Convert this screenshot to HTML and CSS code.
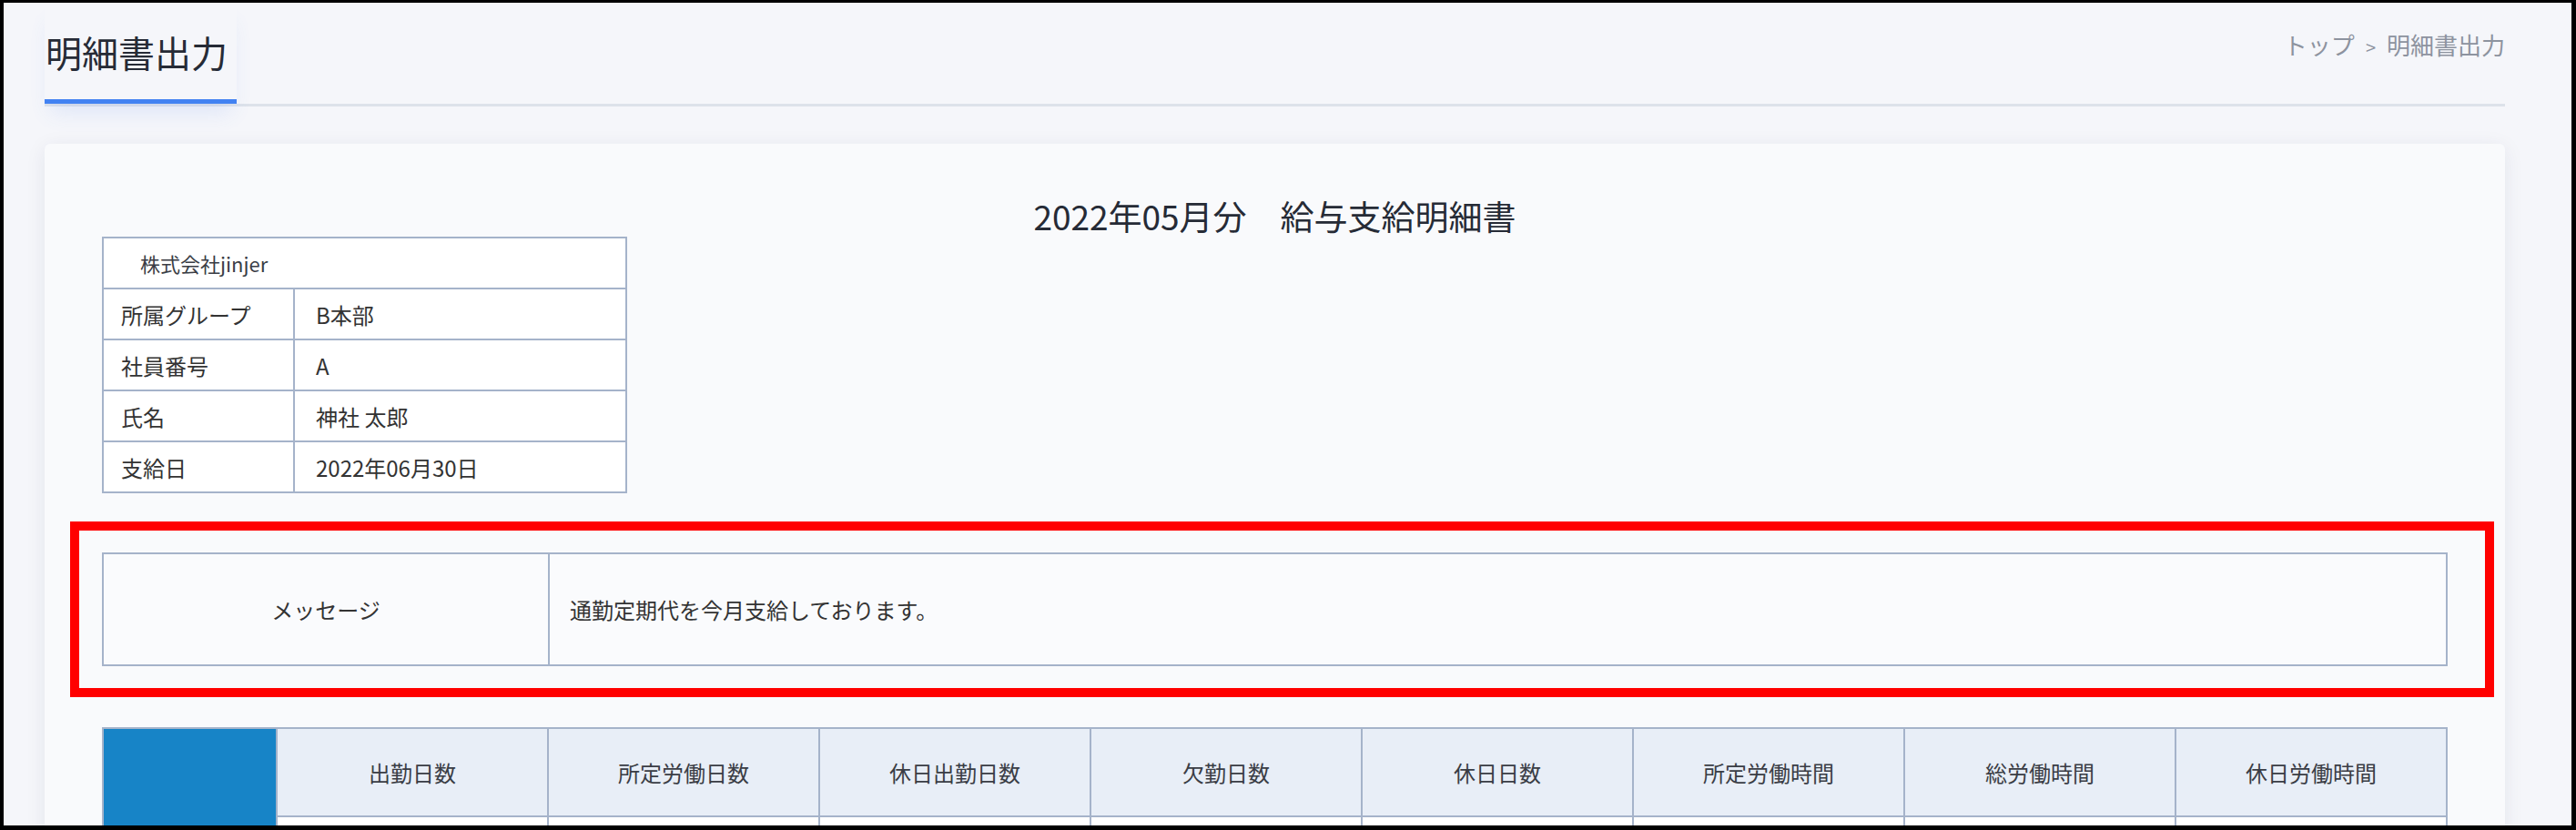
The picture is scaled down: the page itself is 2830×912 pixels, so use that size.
FILE: index.html
```html
<!DOCTYPE html>
<html lang="ja">
<head>
    <meta charset="UTF-8">
    <meta name="viewport" content="width=device-width, initial-scale=1.0">
    <title>明細書出力</title>
    <link rel="stylesheet" href="styles.css">
</head>
<body>
    <div class="frame">
        <div class="page">
            <div class="page-head">
                <h1 class="page-title">明細書出力</h1>
                <div class="breadcrumb">トップ<span class="sep">&gt;</span>明細書出力</div>
            </div>

            <div class="card">
                <h2 class="slip-title">2022年05月分　給与支給明細書</h2>

                <table class="info">
                    <tr>
                        <td class="company" colspan="2">株式会社jinjer</td>
                    </tr>
                    <tr>
                        <td class="label">所属グループ</td>
                        <td class="value">B本部</td>
                    </tr>
                    <tr>
                        <td class="label">社員番号</td>
                        <td class="value">A</td>
                    </tr>
                    <tr>
                        <td class="label">氏名</td>
                        <td class="value">神社 太郎</td>
                    </tr>
                    <tr>
                        <td class="label">支給日</td>
                        <td class="value">2022年06月30日</td>
                    </tr>
                </table>

                <div class="mark">
                    <table class="message">
                        <tr>
                            <td class="msg-label">メッセージ</td>
                            <td class="msg-text">通勤定期代を今月支給しております。</td>
                        </tr>
                    </table>
                </div>

                <table class="attend">
                    <tr class="attend-head">
                        <td class="side" rowspan="2"></td>
                        <td>出勤日数</td>
                        <td>所定労働日数</td>
                        <td>休日出勤日数</td>
                        <td>欠勤日数</td>
                        <td>休日日数</td>
                        <td>所定労働時間</td>
                        <td>総労働時間</td>
                        <td>休日労働時間</td>
                    </tr>
                    <tr class="attend-body">
                        <td></td>
                        <td></td>
                        <td></td>
                        <td></td>
                        <td></td>
                        <td></td>
                        <td></td>
                        <td></td>
                    </tr>
                </table>
            </div>
        </div>
    </div>
</body>
</html>
```

FILE: styles.css
```css
body {
    margin: 0;
    font-family: "Noto Sans CJK JP", "Noto Sans", sans-serif;
    color: #333;
}

.frame {
    height: 912px;
    box-sizing: border-box;
    border-style: solid;
    border-color: #000;
    border-width: 3px 5px 5px 4px;
    background-color: #f5f6fa;
    overflow: hidden;
}

.page {
    padding: 0 73px 0 45px;
}

/* header */
.page-head {
    display: flex;
    justify-content: space-between;
    align-items: flex-start;
    border-bottom: 3px solid #dde2ea;
}

.page-title {
    margin: 0;
    padding: 26px 10px 24px 1px;
    font-size: 40px;
    line-height: 56px;
    font-weight: 400;
    color: #262b36;
    border-bottom: 5px solid #4282f2;
    box-shadow: 0 16px 22px -6px rgba(70, 120, 240, 0.12);
}

.breadcrumb {
    padding-top: 27px;
    font-size: 26px;
    line-height: 38px;
    color: #8d939f;
}

.sep {
    margin: 0 12px;
    font-size: 20px;
}

/* card */
.card {
    margin-top: 41px;
    padding: 57px 63px 40px 63px;
    background-color: #f9fafc;
    border-radius: 6px;
    box-shadow: 0 4px 22px rgba(30, 40, 80, 0.08);
}

.slip-title {
    margin: 0 0 1px;
    text-align: center;
    font-size: 37px;
    line-height: 44px;
    font-weight: 400;
    color: #262b36;
}

table {
    border-collapse: collapse;
}

td {
    border: 2px solid #a5b3ca;
    padding: 0;
    font-size: 24px;
}

/* info table */
.info {
    width: 577px;
    background-color: #fff;
}

.info td {
    height: 54px;
}

.info .company {
    padding-left: 40px;
    font-size: 22px;
    color: #3a3d45;
}

.info .label {
    width: 189px;
    padding-left: 19px;
}

.info .value {
    padding-left: 23px;
}

/* message */
.mark {
    margin: 31px -51px 0 -35px;
    padding: 24px 41px 24px 25px;
    border: 10px solid #ff0000;
}

.message {
    width: 100%;
    background-color: #fafbfd;
}

.message td {
    height: 121px;
}

.msg-label {
    width: 488px;
    text-align: center;
}

.msg-text {
    padding-left: 22px;
}

/* attendance */
.attend {
    width: 100%;
    margin-top: 33px;
    table-layout: fixed;
}

.attend td {
    text-align: center;
    color: #3a3d45;
}

.attend-head td {
    height: 95px;
    background-color: #e8eef7;
}

.attend-head .side {
    width: 189px;
    background-color: #1784c7;
}

.attend-body td {
    height: 95px;
    background-color: #fff;
}
```
